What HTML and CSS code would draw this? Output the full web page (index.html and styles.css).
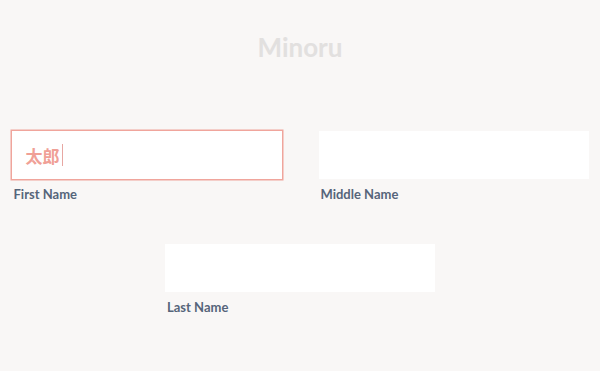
FILE: index.html
```html
<!DOCTYPE html>
<html lang="ja">
<head>
<meta charset="utf-8">
<title>Minoru</title>
<link rel="stylesheet" href="styles.css">
</head>
<body>
<h1 class="title">Minoru</h1>
<form class="fields">
  <div class="field">
    <div class="input input-focused"><span class="value">太郎</span><span class="caret"></span></div>
    <label class="label">First Name</label>
  </div>
  <div class="field">
    <input class="input" type="text">
    <label class="label">Middle Name</label>
  </div>
  <div class="field">
    <input class="input" type="text">
    <label class="label">Last Name</label>
  </div>
</form>
</body>
</html>
```
FILE: styles.css
```css
html, body {
  margin: 0;
  padding: 0;
  background: #f9f7f6;
  font-family: "Lato", "Open Sans", sans-serif;
}
.title {
  margin: 31px 0 0;
  font-size: 26px;
  line-height: 32px;
  font-weight: 700;
  color: #e2e0df;
  text-align: center;
}
.fields {
  margin: 68px 0 0;
  display: flex;
  flex-wrap: wrap;
  justify-content: center;
  column-gap: 37px;
  row-gap: 40px;
}
.field {
  width: 270px;
  display: flex;
  flex-direction: column;
}
.input {
  box-sizing: border-box;
  width: 270px;
  height: 48px;
  margin: 0;
  border: none;
  background: #ffffff;
  outline: none;
  padding: 0 14px;
  display: flex;
  align-items: center;
}
.input-focused {
  box-shadow: 0 0 0 1.5px #f0a59c;
}
.value {
  font-family: "Noto Sans CJK JP", "Noto Sans CJK SC", sans-serif;
  font-weight: 700;
  font-size: 17px;
  color: #f0a096;
}
.caret {
  width: 1px;
  height: 22px;
  margin-left: 2px;
  background: #e7a7a2;
}
.label {
  padding: 5px 0 0 2px;
  font-size: 13px;
  line-height: 20px;
  font-weight: 700;
  color: #56657a;
}
```
